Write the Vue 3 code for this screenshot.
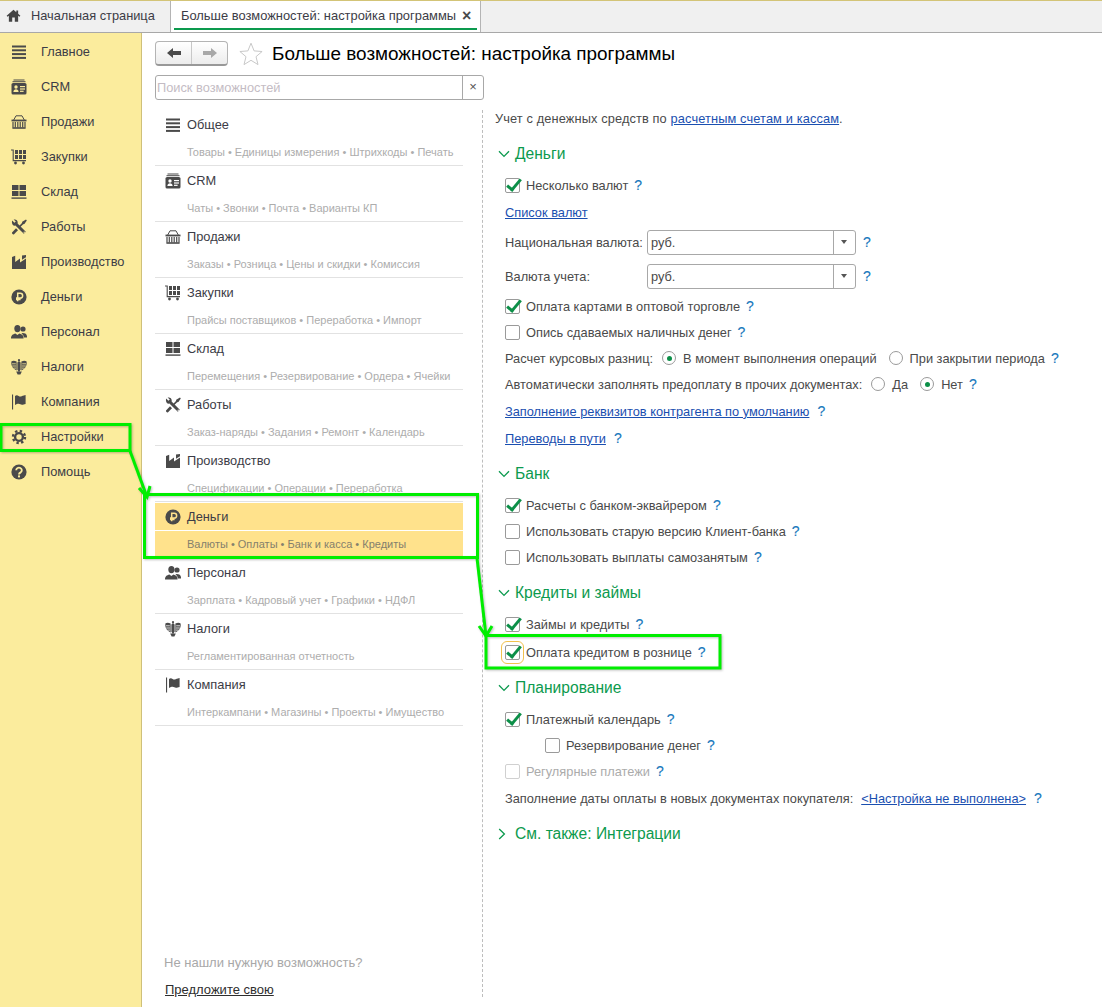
<template>
  <div class="app">
    <svg class="defs" width="0" height="0" aria-hidden="true">
      <symbol id="i-main" viewBox="0 0 16 16">
        <rect x="1" y="1.5" width="14" height="2" /><rect x="1" y="5.3" width="14" height="2" />
        <rect x="1" y="9.1" width="14" height="2" /><rect x="1" y="12.9" width="14" height="2" />
      </symbol>
      <symbol id="i-crm" viewBox="0 0 16 16">
        <rect x="2.5" y="0.5" width="11" height="1" /><rect x="1.5" y="2.2" width="13" height="1" />
        <rect x="0.5" y="4" width="15" height="11.5" rx="1.6" />
        <circle cx="5" cy="8" r="1.7" class="cut" /><path d="M2.4 13c0-2 1.2-2.8 2.6-2.8s2.6.8 2.6 2.8z" class="cut" />
        <rect x="9" y="7" width="5" height="1.2" class="cut" /><rect x="9" y="9.4" width="5" height="1.2" class="cut" /><rect x="9" y="11.7" width="3.6" height="1.2" class="cut" />
      </symbol>
      <symbol id="i-sales" viewBox="0 0 16 16">
        <path d="M2.7 6 5 1.8h6L13.3 6" fill="none" stroke="currentColor" stroke-width="1" />
        <rect x="0.5" y="5.6" width="15" height="1.8" />
        <path d="M2 8v5.5M4.3 8v5.5M6.8 8v5.5M9.2 8v5.5M11.7 8v5.5M14 8v5.5" stroke="currentColor" stroke-width="1.2" />
        <rect x="1.4" y="13.2" width="13.2" height="1.6" />
      </symbol>
      <symbol id="i-buy" viewBox="0 0 16 16">
        <path d="M0 1h2.2v10.6H15" fill="none" stroke="currentColor" stroke-width="1.1" />
        <rect x="4" y="1" width="3" height="4" /><rect x="8" y="1" width="3" height="4" /><rect x="12" y="1" width="3" height="4" />
        <rect x="4" y="6" width="3" height="4" /><rect x="8" y="6" width="3" height="4" /><rect x="12" y="6" width="3" height="4" />
        <circle cx="4.5" cy="14" r="1.4" /><circle cx="12.5" cy="14" r="1.4" />
      </symbol>
      <symbol id="i-stock" viewBox="0 0 16 16">
        <rect x="1" y="1" width="6.5" height="5" /><rect x="8.5" y="1" width="6.5" height="5" />
        <rect x="1" y="7" width="6.5" height="5" /><rect x="8.5" y="7" width="6.5" height="5" />
        <rect x="0.5" y="13.4" width="15" height="1.4" />
      </symbol>
      <symbol id="i-work" viewBox="0 0 16 16">
        <path d="M1.2 1.6 3.4 3.8 4.8 2.6 2.6.6C5-.2 7.2 1.6 6.6 4.4L14.8 12.8 12.8 14.8 4.4 6.6C2 7.2.2 4.4 1.2 1.6z" />
        <circle cx="13.2" cy="13.2" r=".7" class="cut" />
        <path d="M15 .6 15.8 1.6 13.4 5 12.2 5.2 8.8 8.6 7.6 7.4 11 4 11.2 2.8z" />
        <path d="M5 9.2 7 11.2 2.8 15.4C2 15.8.6 14.4 1 13.4z" />
      </symbol>
      <symbol id="i-prod" viewBox="0 0 16 16">
        <path d="M1 15V3l3.2-1.2V8L9 4.6v3.8l6-4V15z" />
        <path d="M11 1.5l4-.5v2.2l-4 2.6z" />
      </symbol>
      <symbol id="i-money" viewBox="0 0 16 16">
        <circle cx="8" cy="8" r="7.6" />
        <path d="M6.7 12.2V4.3h2.6a2.3 2.3 0 0 1 0 4.7H5M5 10.6h4.6" fill="none" class="cut-line" stroke-width="1.5" />
      </symbol>
      <symbol id="i-staff" viewBox="0 0 16 16">
        <circle cx="12" cy="5" r="2.6" />
        <path d="M11.5 9c2.6 0 4.5.9 4.5 3.6v1h-3.2c0-2-.8-3.4-2.4-4.2z" />
        <ellipse cx="6.4" cy="4.6" rx="3.1" ry="3.6" />
        <path d="M0 14.6c0-3.2 1.8-4.2 4.4-5l2 1.4 2-1.4c2.6.8 4.2 1.8 4.2 5z" />
      </symbol>
      <symbol id="i-tax" viewBox="0 0 16 16">
        <path d="M5.6 2.6C3 1.2 1.4 1.8.4 2.6c-.4 3 .4 7 5.2 8.8z" />
        <path d="M10.4 2.6c2.6-1.4 4.2-.8 5.2 0 .4 3-.4 7-5.2 8.8z" />
        <path d="M8 2 6.4 3.6v7L8 13.4l1.6-2.8v-7z" />
        <path d="M1 4.8h3.8M1.2 7h3.8M2.4 9.1h2.6M11.2 4.8H15M11 7h3.8M11 9.1h2.6" class="cut-line" stroke-width=".8" fill="none" />
        <path d="M5.2 12.6h5.6L9.4 15.4H6.6z" />
        <circle cx="8" cy="1.2" r="1.1" />
      </symbol>
      <symbol id="i-org" viewBox="0 0 16 16">
        <rect x="1" y="0.5" width="1.1" height="15" />
        <path d="M4 2c1.6-1.2 2.6-.6 3.6 0s2.2.8 3.4 0l3.6-1v9c-1.6.2-2.4.8-3.6.8-1.4 0-2-1-3.4-1-1.2 0-2.2.4-3.6 1.2z" />
      </symbol>
      <symbol id="i-gear" viewBox="0 0 16 16">
        <circle cx="8" cy="8" r="3.9" fill="none" stroke="currentColor" stroke-width="2.4" />
        <circle cx="8" cy="8" r="6" fill="none" stroke="currentColor" stroke-width="2.4" stroke-dasharray="2.356 2.356" />
      </symbol>
      <symbol id="i-help" viewBox="0 0 16 16">
        <circle cx="8" cy="8" r="7.6" />
        <path d="M5.2 6.2a2.8 2.6 0 1 1 4.4 2.2C8.6 9 8 9.5 8 10.6" fill="none" class="cut-line" stroke-width="1.9" />
        <rect x="7" y="11.4" width="2" height="2" class="cut" />
      </symbol>
    </svg>

    <header class="tabs">
      <div class="tab tab-home">
        <svg class="home" viewBox="0 0 16 14"><path d="M8 .8.6 7.4l1 1L3 7.2V13.6h3.6V9.2h2.8v4.4H13V7.2l1.4 1.2 1-1L13 5.2V1.6h-2v1.8z" /></svg>
        Начальная страница
      </div>
      <div class="tab tab-active">
        Больше возможностей: настройка программы
        <span class="tab-x">×</span>
      </div>
    </header>

    <div class="body">
      <aside class="side">
        <div v-for="item in sections" :key="item.title" class="side-item">
          <svg class="ic"><use :href="'#i-' + item.icon" /></svg>
          <span>{{ item.title }}</span>
        </div>
      </aside>

      <main class="main">
        <div class="title-row">
          <div class="nav-btns">
            <div class="nav-btn">
              <svg viewBox="0 0 14 12" width="14" height="12"><path d="M0 6 6 1v3h8v4H6v3z" fill="#4a4a4a" /></svg>
            </div>
            <div class="nav-btn">
              <svg viewBox="0 0 14 12" width="14" height="12"><path d="M14 6 8 1v3H0v4h8v3z" fill="#a8a8a8" /></svg>
            </div>
          </div>
          <svg class="star" viewBox="0 0 24 23"><path d="M12 1.2 15.1 8.9l8 .6-6.1 5.2 2 7.9-7-4.3-7 4.3 2-7.9L.9 9.5l8-.6z" /></svg>
          <h1>Больше возможностей: настройка программы</h1>
        </div>

        <div class="search">
          <input type="text" placeholder="Поиск возможностей" />
          <span class="search-x">×</span>
        </div>

        <div class="cols">
          <div class="left">
            <div
              v-for="f in features"
              :key="f.title"
              class="feat"
              :class="{ on: f.title === 'Деньги' }"
            >
              <div class="feat-head">
                <svg class="ic"><use :href="'#i-' + f.icon" /></svg>
                <span>{{ f.title }}</span>
              </div>
              <div class="feat-sub">{{ f.sub }}</div>
            </div>
            <div class="left-foot">
              <div class="foot-q">Не нашли нужную возможность?</div>
              <a class="foot-a">Предложите свою</a>
            </div>
          </div>

          <div class="right">
            <div class="row intro">Учет с денежных средств по&nbsp;<a class="lnk">расчетным счетам и кассам</a>.</div>

            <section class="sec">
              <div class="sec-head"><svg class="chev" viewBox="0 0 12 8"><path d="M1 1.2 6 6.4l5-5.2" /></svg>Деньги</div>
              <div class="row"><span class="cb on" />Несколько валют<span class="q">?</span></div>
              <div class="row m1"><a class="lnk">Список валют</a></div>
              <div class="row m4">
                <span class="fld-label">Национальная валюта:</span>
                <div class="fld"><span>руб.</span><i /></div>
                <span class="q q-fld">?</span>
              </div>
              <div class="row m8">
                <span class="fld-label">Валюта учета:</span>
                <div class="fld"><span>руб.</span><i /></div>
                <span class="q q-fld">?</span>
              </div>
              <div class="row m4"><span class="cb on" />Оплата картами в оптовой торговле<span class="q">?</span></div>
              <div class="row"><span class="cb" />Опись сдаваемых наличных денег<span class="q">?</span></div>
              <div class="row">
                <span>Расчет курсовых разниц:</span>
                <span class="rb on rb-first" /><span>В момент выполнения операций</span>
                <span class="rb rb-next" /><span>При закрытии периода</span><span class="q">?</span>
              </div>
              <div class="row">
                <span>Автоматически заполнять предоплату в прочих документах:</span>
                <span class="rb rb-first" /><span>Да</span>
                <span class="rb on rb-next" /><span>Нет</span><span class="q">?</span>
              </div>
              <div class="row m1"><a class="lnk">Заполнение реквизитов контрагента по умолчанию</a><span class="q q-far">?</span></div>
              <div class="row m1"><a class="lnk">Переводы в пути</a><span class="q q-far">?</span></div>
            </section>

            <section class="sec">
              <div class="sec-head"><svg class="chev" viewBox="0 0 12 8"><path d="M1 1.2 6 6.4l5-5.2" /></svg>Банк</div>
              <div class="row"><span class="cb on" />Расчеты с банком-эквайрером<span class="q">?</span></div>
              <div class="row"><span class="cb" />Использовать старую версию Клиент-банка<span class="q">?</span></div>
              <div class="row"><span class="cb" />Использовать выплаты самозанятым<span class="q">?</span></div>
            </section>

            <section class="sec">
              <div class="sec-head"><svg class="chev" viewBox="0 0 12 8"><path d="M1 1.2 6 6.4l5-5.2" /></svg>Кредиты и займы</div>
              <div class="row"><span class="cb on" />Займы и кредиты<span class="q">?</span></div>
              <div class="row m2"><span class="cb on focus" />Оплата кредитом в рознице<span class="q">?</span></div>
            </section>

            <section class="sec">
              <div class="sec-head"><svg class="chev" viewBox="0 0 12 8"><path d="M1 1.2 6 6.4l5-5.2" /></svg>Планирование</div>
              <div class="row"><span class="cb on" />Платежный календарь<span class="q">?</span></div>
              <div class="row sub"><span class="cb" />Резервирование денег<span class="q">?</span></div>
              <div class="row off"><span class="cb" />Регулярные платежи<span class="q">?</span></div>
              <div class="row m1"><span>Заполнение даты оплаты в новых документах покупателя:</span><a class="lnk lnk-set">&lt;Настройка не выполнена&gt;</a><span class="q q-far">?</span></div>
            </section>

            <section class="sec">
              <div class="sec-head"><svg class="chev closed" viewBox="0 0 8 12"><path d="M1.2 1 6.4 6l-5.2 5" /></svg>См. также: Интеграции</div>
            </section>
          </div>
        </div>
      </main>
    </div>

    <!-- пометки поверх скриншота -->
    <svg class="marks" width="1102" height="1007" viewBox="0 0 1102 1007">
      <g fill="none" stroke="#00ee00" stroke-width="3">
        <rect x="1" y="424.5" width="129" height="26" />
        <rect x="144.5" y="494.5" width="333" height="63" />
        <rect x="486" y="635.5" width="234" height="32.5" />
        <path d="M130 451 147 497" />
        <path d="M139 488 147 497 150 486" />
        <path d="M477 558 486 636" />
        <path d="M479 626 486 636 492 626" />
      </g>
    </svg>
  </div>
</template>

<script setup>
const sections = [
  { title: 'Главное', icon: 'main' },
  { title: 'CRM', icon: 'crm' },
  { title: 'Продажи', icon: 'sales' },
  { title: 'Закупки', icon: 'buy' },
  { title: 'Склад', icon: 'stock' },
  { title: 'Работы', icon: 'work' },
  { title: 'Производство', icon: 'prod' },
  { title: 'Деньги', icon: 'money' },
  { title: 'Персонал', icon: 'staff' },
  { title: 'Налоги', icon: 'tax' },
  { title: 'Компания', icon: 'org' },
  { title: 'Настройки', icon: 'gear' },
  { title: 'Помощь', icon: 'help' }
]

const features = [
  { title: 'Общее', icon: 'main', sub: 'Товары • Единицы измерения • Штрихкоды • Печать' },
  { title: 'CRM', icon: 'crm', sub: 'Чаты • Звонки • Почта • Варианты КП' },
  { title: 'Продажи', icon: 'sales', sub: 'Заказы • Розница • Цены и скидки • Комиссия' },
  { title: 'Закупки', icon: 'buy', sub: 'Прайсы поставщиков • Переработка • Импорт' },
  { title: 'Склад', icon: 'stock', sub: 'Перемещения • Резервирование • Ордера • Ячейки' },
  { title: 'Работы', icon: 'work', sub: 'Заказ-наряды • Задания • Ремонт • Календарь' },
  { title: 'Производство', icon: 'prod', sub: 'Спецификации • Операции • Переработка' },
  { title: 'Деньги', icon: 'money', sub: 'Валюты • Оплаты • Банк и касса • Кредиты' },
  { title: 'Персонал', icon: 'staff', sub: 'Зарплата • Кадровый учет • Графики • НДФЛ' },
  { title: 'Налоги', icon: 'tax', sub: 'Регламентированная отчетность' },
  { title: 'Компания', icon: 'org', sub: 'Интеркампани • Магазины • Проекты • Имущество' }
]
</script>

<style>
html, body {
  margin: 0;
  background: #fff;
}
</style>

<style scoped>
.app {
  position: relative;
  width: 1102px;
  height: 1007px;
  overflow: hidden;
  display: flex;
  flex-direction: column;
  font-family: "Liberation Sans", Arial, sans-serif;
  font-size: 12.8px;
  color: #4a4a4a;
  --cut: #fff;
}
.defs {
  position: absolute;
}
.cut {
  fill: var(--cut);
}
.cut-line {
  stroke: var(--cut);
}

/* вкладки */
.tabs {
  display: flex;
  height: 33px;
  box-sizing: border-box;
  flex-shrink: 0;
  background: #f0f0f0;
  border-top: 1px solid #d3c477;
  border-bottom: 1px solid #a8a8a8;
  color: #3c3c46;
}
.tab {
  display: flex;
  align-items: center;
  box-sizing: border-box;
  border-right: 1px solid #b4b4b4;
}
.tab-home {
  width: 171px;
  padding-left: 6px;
  padding-bottom: 2px;
}
.home {
  width: 15px;
  height: 13px;
  margin-right: 10px;
  fill: #444;
}
.tab-active {
  position: relative;
  width: 310px;
  padding: 0 0 2px 10px;
  font-size: 12.9px;
  background: #fff;
}
.tab-active::after {
  content: "";
  position: absolute;
  left: 3px;
  right: 3px;
  bottom: 2px;
  height: 2px;
  background: #0c9a4e;
}
.tab-x {
  margin-left: 6px;
  font-size: 16px;
  font-weight: 700;
  color: #4a4a4a;
}

.body {
  flex: 1;
  display: flex;
  min-height: 0;
}

/* левая панель */
.side {
  width: 142px;
  box-sizing: border-box;
  flex-shrink: 0;
  padding-top: 1px;
  background: #fbec9d;
  border-right: 1px solid #cfc07a;
  color: #3c3c46;
  --cut: #fbec9d;
}
.side-item {
  display: flex;
  align-items: center;
  height: 35px;
  padding-left: 11px;
}
.ic {
  width: 16px;
  height: 16px;
  flex-shrink: 0;
  fill: #4a4a4a;
  color: #4a4a4a;
}
.side-item .ic {
  margin-right: 14px;
}

/* основная область */
.main {
  flex: 1;
  min-width: 0;
  display: flex;
  flex-direction: column;
  padding: 8px 0 10px 13px;
}
.title-row {
  display: flex;
  align-items: center;
  height: 25px;
}
.nav-btns {
  display: flex;
  width: 73px;
  height: 25px;
  box-sizing: border-box;
  border: 1px solid #b4b4b4;
  border-bottom: 2px solid #989898;
  border-radius: 4px;
  background: linear-gradient(#fff, #ececec);
}
.nav-btn {
  flex: 1;
  display: flex;
  align-items: center;
  justify-content: center;
}
.nav-btn + .nav-btn {
  border-left: 1px solid #c8c8c8;
}
.star {
  width: 24px;
  height: 23px;
  margin-left: 11px;
  fill: #fff;
  stroke: #c8c8c8;
}
h1 {
  margin: 0 0 0 9px;
  font-size: 18.9px;
  font-weight: 400;
  color: #000;
}
.search {
  display: flex;
  width: 329px;
  height: 25px;
  margin-top: 9px;
  box-sizing: border-box;
  border: 1px solid #a8a8a8;
  border-radius: 3px;
}
.search input {
  flex: 1;
  min-width: 0;
  border: 0;
  outline: 0;
  padding: 0 1px;
  font: inherit;
  background: transparent;
}
.search input::placeholder {
  color: #c4bcc4;
  opacity: 1;
}
.search-x {
  width: 20px;
  border-left: 1px solid #a8a8a8;
  text-align: center;
  line-height: 21px;
  font-size: 13px;
  color: #555;
}
.cols {
  flex: 1;
  display: flex;
  min-height: 0;
  margin-top: 10px;
}
.left {
  width: 328px;
  box-sizing: border-box;
  flex-shrink: 0;
  display: flex;
  flex-direction: column;
  padding-right: 19px;
  border-right: 1px dashed #bdbdbd;
}
.feat {
  height: 56px;
  box-sizing: border-box;
  padding-top: 1px;
  border-bottom: 1px solid #e2e2e2;
  color: #3c3c46;
}
.feat.on {
  border-bottom-color: #fff;
  --cut: #ffe28c;
}
.feat-head {
  display: flex;
  align-items: center;
  height: 27px;
  margin-bottom: 1px;
  padding-left: 10px;
}
.feat-head .ic {
  margin-right: 6px;
}
.feat-sub {
  height: 26px;
  padding-left: 32px;
  line-height: 26px;
  font-size: 11px;
  white-space: nowrap;
  color: #adadad;
}
.feat.on .feat-head,
.feat.on .feat-sub {
  background: #ffe28c;
}
.feat.on .feat-sub {
  color: #84806c;
}
.left-foot {
  margin-top: auto;
  padding-left: 9px;
}
.foot-q {
  height: 14px;
  line-height: 14px;
  margin-bottom: 13px;
  font-size: 13px;
  color: #a8a8a8;
}
.foot-a {
  display: block;
  height: 14px;
  line-height: 14px;
  padding-left: 1px;
  font-size: 13px;
  color: #2e2e2e;
  text-decoration: underline;
}

/* правая колонка настроек */
.right {
  flex: 1;
  min-width: 0;
  padding-left: 12px;
}
.row {
  display: flex;
  align-items: center;
  height: 26px;
  padding-left: 10px;
  white-space: pre;
}
.intro {
  padding-left: 0;
  height: 16px;
  letter-spacing: 0.12px;
}
.m1 { margin-top: 1px; }
.m2 { margin-top: 2px; }
.m4 { margin-top: 4px; }
.m8 { margin-top: 8px; }
.sub { padding-left: 50px; }
.off { color: #ababab; }
.sec {
  margin-top: 9px;
}
.intro + .sec {
  margin-top: 14px;
}
.sec-head {
  display: flex;
  align-items: center;
  height: 26px;
  box-sizing: border-box;
  padding-top: 2px;
  margin-bottom: 6px;
  padding-left: 3px;
  font-size: 15.6px;
  color: #0c9a4e;
}
.chev {
  width: 12px;
  height: 8px;
  margin-right: 5px;
  fill: none;
  stroke: #0c9a4e;
  stroke-width: 1.3;
}
.chev.closed {
  width: 8px;
  height: 12px;
  margin-right: 9px;
}
.lnk {
  color: #1a4fb0;
  text-decoration: underline;
}
.lnk-set {
  margin-left: 8px;
}
.q {
  margin-left: 6px;
  font-size: 14px;
  -webkit-text-stroke: 0.15px #1878bc;
  color: #1878bc;
}
.q-far {
  margin-left: 8px;
}
.q-fld {
  margin-left: 7px;
}
.cb {
  position: relative;
  width: 15px;
  height: 15px;
  box-sizing: border-box;
  margin-right: 6px;
  flex-shrink: 0;
  border: 1px solid #9a9a9a;
  border-radius: 2px;
  background: #fff;
}
.cb.on::after {
  content: "";
  position: absolute;
  left: 4px;
  top: -3px;
  width: 5px;
  height: 12px;
  border: solid #0c8f48;
  border-width: 0 3px 3px 0;
  transform: rotate(40deg);
}
.cb.focus {
  outline: 1px solid #f2c14e;
  outline-offset: 3px;
}
.off .cb {
  border-color: #d0d0d0;
}
.rb {
  position: relative;
  width: 14px;
  height: 14px;
  box-sizing: border-box;
  margin-right: 7px;
  flex-shrink: 0;
  border: 1px solid #9a9a9a;
  border-radius: 50%;
  background: #fff;
}
.rb.on::after {
  content: "";
  position: absolute;
  left: 3.5px;
  top: 3.5px;
  width: 5px;
  height: 5px;
  border-radius: 50%;
  background: #0c8f48;
}
.rb-first {
  margin-left: 9px;
}
.rb-next {
  margin-left: 12px;
}
.fld-label {
  width: 142px;
  flex-shrink: 0;
}
.fld {
  display: flex;
  width: 209px;
  height: 25px;
  box-sizing: border-box;
  border: 1px solid #a8a8a8;
  border-radius: 3px;
  line-height: 23px;
}
.fld span {
  flex: 1;
  padding-left: 3px;
}
.fld i {
  position: relative;
  width: 21px;
  border-left: 1px solid #a8a8a8;
}
.fld i::after {
  content: "";
  position: absolute;
  left: 7px;
  top: 9px;
  border: 3.5px solid transparent;
  border-top: 4px solid #555;
  border-bottom: 0;
}

.marks {
  position: absolute;
  left: 0;
  top: 0;
  pointer-events: none;
  filter: drop-shadow(1px 1px 1px rgba(0, 0, 0, 0.25));
}
</style>
